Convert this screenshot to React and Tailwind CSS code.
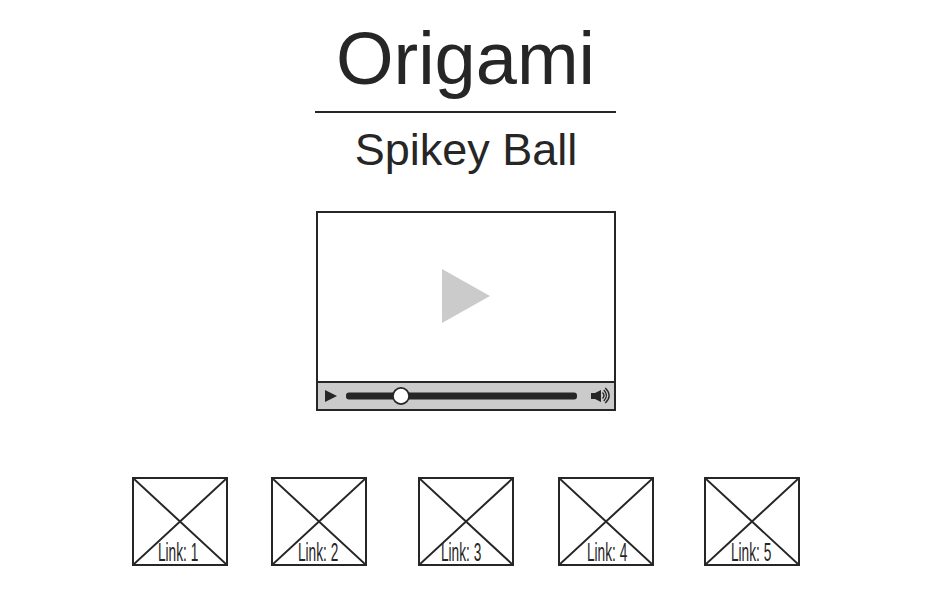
const links = [
  { label: 'Link: 1', gap: 'ml-[132px]', text: 'left-[24px]' },
  { label: 'Link: 2', gap: 'ml-[43px]', text: 'left-[25px]' },
  { label: 'Link: 3', gap: 'ml-[51px]', text: 'left-[21px]' },
  { label: 'Link: 4', gap: 'ml-[44px]', text: 'left-[27px]' },
  { label: 'Link: 5', gap: 'ml-[50px]', text: 'left-[25px]' },
];

function Player() {
  return (
    <section className="mt-[35px] flex h-[200px] w-[300px] flex-col border-2 border-[#262626]">
      <div className="flex flex-1 items-center justify-center pb-0.5">
        <svg className="h-[54px] w-[48px]" viewBox="0 0 48 54">
          <path d="M0 0L48 27L0 54Z" fill="#cbcbcb" />
        </svg>
      </div>
      <div className="flex h-7 items-center border-t-2 border-[#262626] bg-[#cbcbcb] pl-[7px]">
        <svg className="h-3 w-3" viewBox="0 0 12 12">
          <path d="M0 0L12 6L0 12Z" fill="#262626" />
        </svg>
        <svg className="ml-[9px] h-[18px] w-[231px]" viewBox="0 0 231 18">
          <rect x="0" y="5.5" width="231" height="7" rx="3" fill="#262626" />
          <circle cx="55" cy="9" r="8.1" fill="white" stroke="#262626" strokeWidth="1.8" />
        </svg>
        <svg className="ml-[14px] h-[18px] w-5" viewBox="0 0 20 18" fill="none" stroke="#262626" strokeWidth="1.4">
          <path d="M0 6H4L10 3V15L4 12H0Z" fill="#262626" stroke="none" />
          <path d="M11.5 5.5Q14.5 8.5 11.5 11.5" />
          <path d="M12.8 3Q18.2 8.5 12.8 14" />
          <path d="M14.3 1Q22 8.5 14.3 16" />
        </svg>
      </div>
    </section>
  );
}

function LinkBox({ label, gap, text }) {
  return (
    <a className={`relative block h-[89px] w-24 border-2 border-[#262626] ${gap}`}>
      <svg className="h-full w-full" viewBox="0 0 92 85" fill="none" stroke="#262626" strokeWidth="2">
        <path d="M0 0L92 85M92 0L0 85" />
      </svg>
      <span className={`absolute top-[58px] origin-left scale-x-[0.525] text-[26px] leading-[30px] whitespace-nowrap ${text}`}>
        {label}
      </span>
    </a>
  );
}

export default function App() {
  return (
    <main className="h-[600px] w-[946px] overflow-hidden bg-white font-['Liberation_Sans',Arial,sans-serif] text-[#262626]">
      <div className="ml-[315px] flex w-[301px] flex-col items-center">
        <h1 className="mt-4 text-[74px] leading-[86px]">Origami</h1>
        <hr className="mt-[9px] h-0.5 w-full border-0 bg-[#262626]" />
        <h2 className="mt-[11px] pl-px text-[45px] leading-[52px]">Spikey Ball</h2>
        <div className="flex w-full justify-end">
          <Player />
        </div>
      </div>
      <nav className="mt-[66px] flex">
        {links.map((link) => (
          <LinkBox key={link.label} {...link} />
        ))}
      </nav>
    </main>
  );
}
